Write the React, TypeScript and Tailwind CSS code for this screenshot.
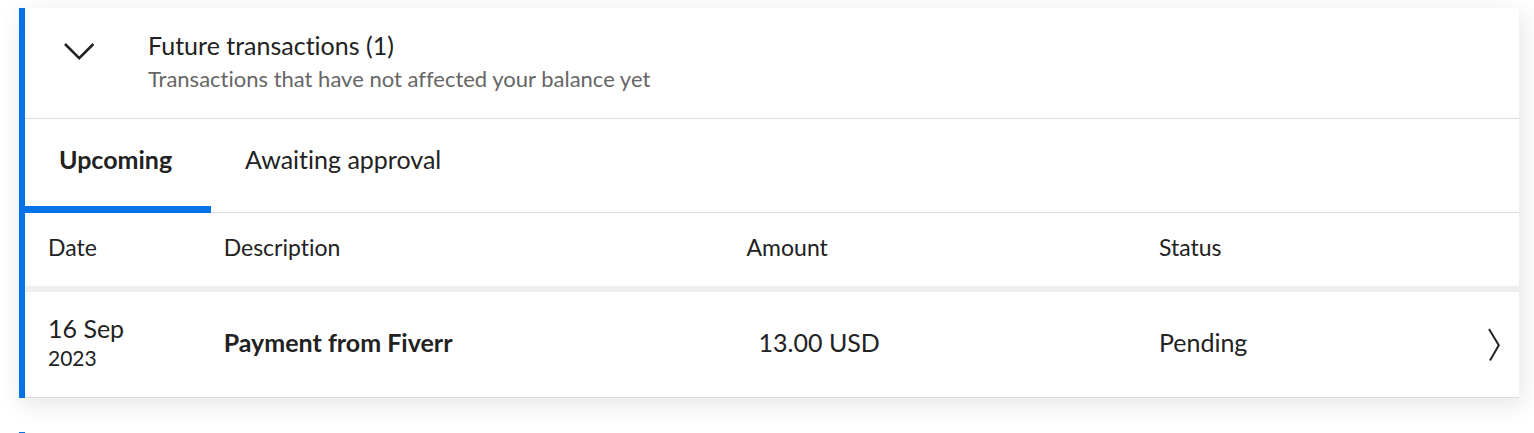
import { useState } from "react";

const tabs = ["Upcoming", "Awaiting approval"];

const transactions = [
  { day: "16 Sep", year: "2023", description: "Payment from Fiverr", amount: "13.00 USD", status: "Pending" },
];

function ChevronDown() {
  return (
    <svg width="32" height="20" viewBox="0 0 32 20" fill="none" stroke="currentColor" strokeWidth="2.6" aria-hidden="true">
      <path d="M2 2 L16.2 16.2 L30.4 2" />
    </svg>
  );
}

function ChevronRight() {
  return (
    <svg width="14" height="34" viewBox="0 0 14 34" fill="none" stroke="currentColor" strokeWidth="2" aria-hidden="true">
      <path d="M2 1 L11.8 17.2 L3 32.5" />
    </svg>
  );
}

export default function App() {
  const [active, setActive] = useState(tabs[0]);

  return (
    <main className="flex min-h-screen flex-col gap-[34px] overflow-hidden bg-white pt-2 pr-[15px] pl-[19px] font-['Lato','Liberation_Sans',sans-serif] text-[#222222] [font-variant-ligatures:none]">
      <section className="border-l-[6px] border-[#0073e6] bg-white shadow-[3px_6px_24px_rgba(0,0,0,0.11)]">
        <header className="flex items-start border-b border-[#dcdcdc] pt-5 pb-6 pl-[38px]">
          <button type="button" aria-label="Collapse future transactions" aria-expanded="true" className="mt-[14px] mr-[53px]">
            <ChevronDown />
          </button>
          <div>
            <h2 className="pb-0.5 text-[25px] leading-[34px]">Future transactions (1)</h2>
            <p className="text-[22px] leading-[30px] text-[#666666]">Transactions that have not affected your balance yet</p>
          </div>
        </header>

        <div role="tablist" className="flex border-b border-[#dcdcdc]">
          {tabs.map((tab) => (
            <button
              key={tab}
              type="button"
              role="tab"
              aria-selected={active === tab}
              onClick={() => setActive(tab)}
              className={
                active === tab
                  ? "-mb-px min-w-[186px] border-b-[7px] border-[#0073e6] px-[34px] pt-6 pb-[31px] text-left text-[25px] leading-8 font-bold"
                  : "-mb-px border-b-[7px] border-transparent px-[34px] pt-6 pb-[31px] text-left text-[25px] leading-8"
              }
            >
              {tab}
            </button>
          ))}
        </div>

        <table className="w-full table-fixed border-collapse text-left">
          <thead>
            <tr className="border-b-[6px] border-[#eeeeee] text-[23px] leading-8">
              <th className="w-[13.3%] pt-[18px] pb-[23px] pl-[23px] font-normal">Date</th>
              <th className="w-[35%] pt-[18px] pb-[23px] font-normal">Description</th>
              <th className="w-[27.6%] pt-[18px] pb-[23px] font-normal">Amount</th>
              <th className="pt-[18px] pb-[23px] font-normal">Status</th>
              <td className="w-12" />
            </tr>
          </thead>
          <tbody>
            {transactions.map((t) => (
              <tr key={t.description} className="border-b border-[#dcdcdc] text-[25px] leading-8">
                <td className="pt-5 pb-[25px] pl-[23px]">
                  <div>{t.day}</div>
                  <div className="text-[21px] leading-7">{t.year}</div>
                </td>
                <td className="pb-1.5 font-bold">{t.description}</td>
                <td className="pb-1.5 pl-3">{t.amount}</td>
                <td className="pb-1.5">{t.status}</td>
                <td className="pl-4">
                  <button type="button" aria-label="Show transaction details" className="block">
                    <ChevronRight />
                  </button>
                </td>
              </tr>
            ))}
          </tbody>
        </table>
      </section>

      <section className="flex-1 border-l-[6px] border-[#0073e6] bg-white shadow-[3px_6px_24px_rgba(0,0,0,0.11)]" />
    </main>
  );
}
